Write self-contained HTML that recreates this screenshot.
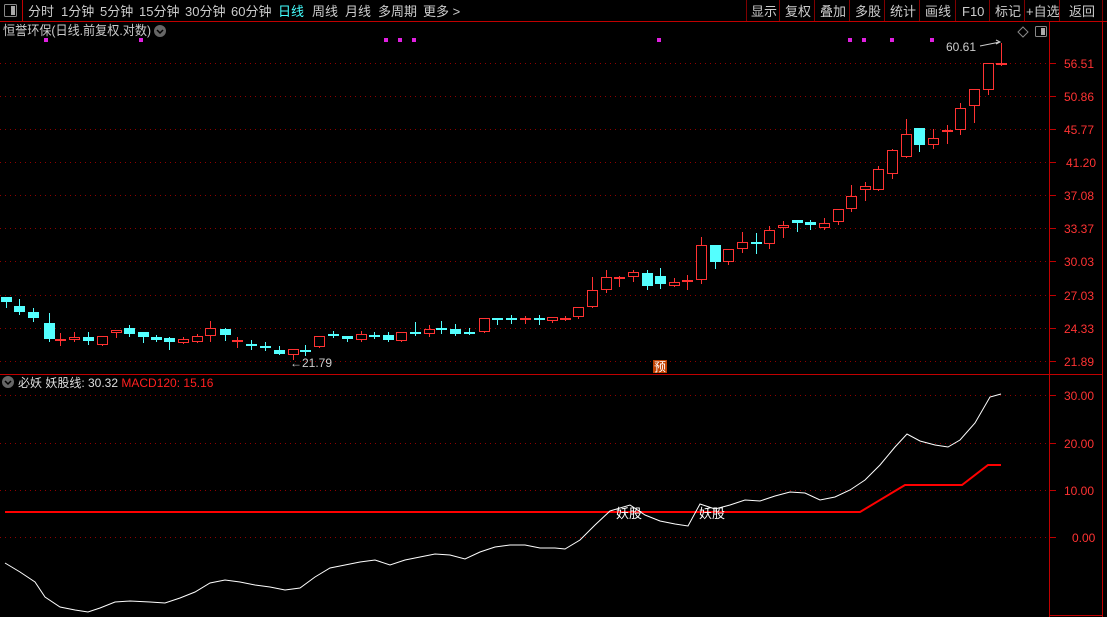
<!DOCTYPE html>
<html><head><meta charset="utf-8">
<style>
html,body{margin:0;padding:0;background:#000;width:1107px;height:617px;overflow:hidden}
svg{display:block}
text{font-family:"Liberation Sans","Noto Sans CJK SC",sans-serif}
</style></head><body>
<svg id="s" width="1107" height="617" xmlns="http://www.w3.org/2000/svg">
<rect width="1107" height="617" fill="#000"/>
<line x1="0" y1="21.5" x2="1107" y2="21.5" stroke="#c00000" stroke-width="1"/>
<rect x="4.5" y="4.5" width="12" height="12" fill="none" stroke="#888" rx="1"/>
<rect x="11" y="6" width="4" height="9" fill="#aaa"/>
<line x1="22.5" y1="0" x2="22.5" y2="21" stroke="#c00000"/>
<g font-size="13" fill="#ccc">
<text x="28" y="16">分时</text><text x="61" y="16">1分钟</text><text x="100" y="16">5分钟</text><text x="139" y="16">15分钟</text><text x="185" y="16">30分钟</text><text x="231" y="16">60分钟</text>
<text x="278" y="16" fill="#4ff">日线</text><text x="312" y="16">周线</text><text x="345" y="16">月线</text><text x="378" y="16">多周期</text><text x="423" y="16">更多 &gt;</text>
<text x="751" y="16">显示</text><text x="785" y="16">复权</text><text x="820" y="16">叠加</text><text x="855" y="16">多股</text><text x="890" y="16">统计</text><text x="925" y="16">画线</text><text x="962" y="16">F10</text><text x="995" y="16">标记</text><text x="1026" y="16">+自选</text><text x="1069" y="16">返回</text>
</g>
<g stroke="#800000">
<line x1="746.5" y1="0" x2="746.5" y2="21"/><line x1="779.5" y1="0" x2="779.5" y2="21"/><line x1="814.5" y1="0" x2="814.5" y2="21"/><line x1="849.5" y1="0" x2="849.5" y2="21"/><line x1="884.5" y1="0" x2="884.5" y2="21"/><line x1="919.5" y1="0" x2="919.5" y2="21"/><line x1="955.5" y1="0" x2="955.5" y2="21"/><line x1="989.5" y1="0" x2="989.5" y2="21"/><line x1="1024.5" y1="0" x2="1024.5" y2="21"/><line x1="1059.5" y1="0" x2="1059.5" y2="21"/><line x1="1102.5" y1="0" x2="1102.5" y2="21"/>
</g>
<text x="3" y="35" font-size="13" fill="#ccc" textLength="148" lengthAdjust="spacingAndGlyphs">恒誉环保(日线.前复权.对数)</text>
<circle cx="160" cy="31" r="6" fill="#666"/><path d="M157 30l3 3 3-3" stroke="#000" stroke-width="1.5" fill="none"/>
<path d="M1023 27l5 5-5 5-5-5z" fill="none" stroke="#888"/>
<rect x="1035.5" y="26.5" width="11" height="10" fill="none" stroke="#888" rx="1"/><rect x="1041" y="28" width="4" height="7" fill="#aaa"/>
<line x1="1049.5" y1="22" x2="1049.5" y2="617" stroke="#c00000"/>
<line x1="1102.5" y1="22" x2="1102.5" y2="617" stroke="#c00000"/>
<line x1="0" y1="374.5" x2="1103" y2="374.5" stroke="#c00000"/>
<line x1="1050" y1="615.5" x2="1103" y2="615.5" stroke="#c00000"/>
<g id="grid"></g>
<g id="candles"></g>
<g font-size="12" fill="#ff3333">
<text x="1064" y="68">56.51</text><text x="1064" y="101">50.86</text><text x="1064" y="134">45.77</text><text x="1066" y="167">41.20</text><text x="1064" y="200">37.08</text><text x="1064" y="233">33.37</text><text x="1064" y="266">30.03</text><text x="1064" y="300">27.03</text><text x="1064" y="333">24.33</text><text x="1064" y="366">21.89</text>
<text x="1064" y="400">30.00</text><text x="1064" y="448">20.00</text><text x="1064" y="495">10.00</text><text x="1072" y="542">0.00</text>
</g>
<text x="946" y="51" font-size="12" fill="#ccc">60.61</text>
<path d="M980 46l20-4m-4-2l4 2-4 2" stroke="#ccc" fill="none"/>
<text x="290" y="367" font-size="12" fill="#ccc">←21.79</text>
<rect x="653" y="360" width="14" height="13" fill="#c04000"/><text x="654" y="371" font-size="12" fill="#fff">预</text>
<circle cx="8" cy="382" r="6" fill="#666"/><path d="M5 381l3 3 3-3" stroke="#000" stroke-width="1.5" fill="none"/>
<text x="18" y="387" font-size="12" fill="#ddd">必妖 妖股线: 30.32 <tspan fill="#ff2020">MACD120: 15.16</tspan></text>
<polyline fill="none" stroke="#f00" stroke-width="2" points="5,512 860,512 905,485 962,485 988,465 1001,465"/>
<polyline fill="none" stroke="#fff" stroke-width="1" points="5,563 20,572 35,582 45,597 60,607 75,610 88,612 100,608 115,602 130,601 150,602 165,603 180,598 195,592 210,583 225,580 240,582 255,585 270,587 285,590 300,588 315,577 330,568 345,565 360,562 375,560 390,565 405,560 420,557 435,554 450,555 465,559 480,552 495,547 510,545 525,545 540,548 555,548 565,549 580,540 595,525 610,511 630,505 645,515 660,521 675,524 688,526 700,504 715,509 730,505 745,500 760,501 775,496 790,492 805,493 820,500 835,497 850,490 865,480 880,465 895,447 907,434 920,441 935,445 948,447 960,440 975,423 990,397 1001,394"/>
<text x="616" y="518" font-size="13" fill="#fff">妖股</text>
<text x="699" y="518" font-size="13" fill="#fff">妖股</text>
</svg>
<script>
var ns="http://www.w3.org/2000/svg";
function el(p,t,a){var e=document.createElementNS(ns,t);for(var k in a)e.setAttribute(k,a[k]);p.appendChild(e);return e;}
var g=document.getElementById('grid');
[63,96,129,162,195,228,261,295,328,361,395,443,490,537].forEach(function(y){
 el(g,'line',{x1:0,y1:y+.5,x2:1049,y2:y+.5,stroke:'#900000','stroke-dasharray':'1 4'});
 el(g,'line',{x1:1050,y1:y+.5,x2:1056,y2:y+.5,stroke:'#c00000'});
});
[46,141,386,400,414,659,850,864,892,932].forEach(function(x){el(g,'rect',{x:x-2,y:38,width:4,height:4,fill:'#e020e0'});});
var A=[[6,297,302,297,307,'c'],[18,306,312,299,314,'c'],[31,312,318,308,321,'c'],[46,323,339,313,341,'c'],[56,339,339,333,345,'r'],[69,337,340,332,341,'r'],[82,337,341,332,344,'c'],[95,336,345,336,345,'r'],[108,330,333,330,337,'r'],[120,328,334,325,336,'c'],[133,332,337,332,342,'c'],[146,337,340,335,341,'c'],[158,338,342,337,349,'c'],[171,339,343,337,343,'r'],[184,336,342,334,342,'r'],[196,328,336,321,341,'r'],[210,329,335,328,340,'c'],[221,340,341,337,347,'r'],[234,344,346,340,349,'c'],[247,346,348,342,350,'c'],[260,350,354,346,354,'c'],[273,349,355,349,359,'r'],[285,350,351,345,355,'c'],[298,336,347,336,347,'r'],[311,334,335,331,337,'c'],[324,336,339,336,341,'c'],[337,334,340,331,341,'r'],[349,335,337,332,338,'c'],[362,335,340,332,341,'c'],[374,332,341,332,341,'r'],[387,332,333,322,335,'c'],[400,329,334,325,336,'r'],[412,328,329,321,333,'c'],[425,329,334,324,335,'c'],[438,332,334,328,334,'c'],[452,318,332,318,332,'r'],[464,318,319,318,324,'c'],[477,318,319,315,323,'c'],[490,318,320,316,323,'r'],[503,318,320,315,324,'c'],[515,317,321,317,322,'r']];
var f=3/2.8;
A=A.map(function(c){return [Math.round(c[0]*f),c[1],c[2],c[3],c[4],c[5]];});
var B=[[565,318,319,316,320,'r'],[578,307,317,307,318,'r'],[592,290,307,277,307,'r'],[606,277,290,270,292,'r'],[619,277,278,276,286,'r'],[633,272,277,270,281,'r'],[647,273,286,270,289,'c'],[660,276,284,268,288,'c'],[674,282,286,278,286,'r'],[687,280,282,275,289,'r'],[701,245,280,237,283,'r'],[715,245,262,245,268,'c'],[728,249,262,249,264,'r'],[742,242,249,232,252,'r'],[756,242,244,233,253,'c'],[769,230,244,226,248,'r'],[783,225,228,221,237,'r'],[797,220,223,220,231,'c'],[810,222,225,220,229,'c'],[824,223,228,218,229,'r'],[838,209,222,209,224,'r'],[851,196,209,185,211,'r'],[865,186,190,182,200,'r'],[878,169,190,166,190,'r'],[892,150,174,149,178,'r'],[906,134,157,119,157,'r'],[919,128,145,128,151,'c'],[933,138,145,129,148,'r'],[947,130,132,125,143,'r'],[960,108,130,103,134,'r'],[974,89,106,89,122,'r'],[988,63,90,63,94,'r'],[1001,63,65,43,65,'r']];
var C=A.concat(B);
var cg=document.getElementById('candles');
C.forEach(function(c){
 var col=c[5]=='c'?'#54ffff':'#ff3232';
 var x=c[0],t=Math.round(c[1]),b=Math.round(c[2]);
 el(cg,'line',{x1:x+.5,y1:Math.round(c[3]),x2:x+.5,y2:Math.round(c[4])+1,stroke:col});
 if(b-t<3){el(cg,'rect',{x:x-5,y:t,width:11,height:Math.max(2,b-t),fill:col});}
 else if(c[5]=='c'){el(cg,'rect',{x:x-5,y:t,width:11,height:b-t,fill:col});}
 else{el(cg,'rect',{x:x-4.5,y:t+.5,width:10,height:b-t-1,fill:'#000',stroke:col});}
});
</script>
</body></html>
